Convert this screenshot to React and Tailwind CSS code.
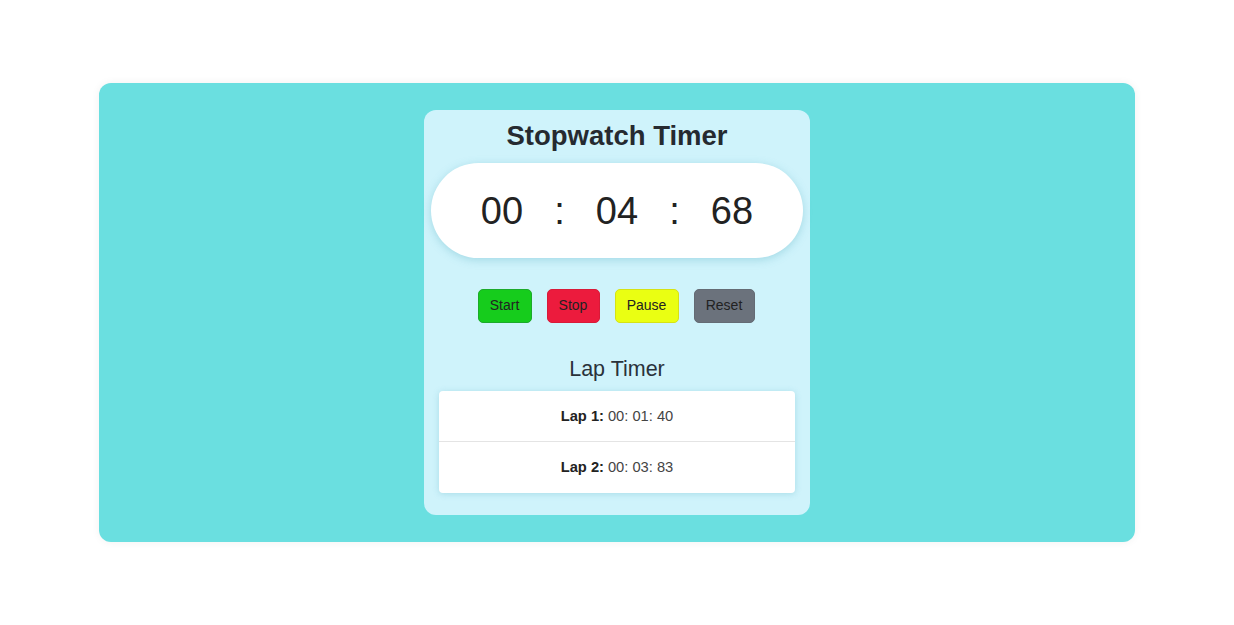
export default function App() {
  const font = { fontFamily: '"Liberation Sans", Arial, sans-serif' };
  return (
    <div className="w-full min-h-[625px] bg-white pt-[83px]" style={font}>
      <div className="mx-auto w-[1036px] h-[459px] bg-[#6adfe0] rounded-[12px] shadow-[0_0_8px_rgba(0,0,0,0.06)] pt-[27px] flex justify-center">
        <div className="w-[386px] h-[405px] bg-[#cff3fb] rounded-[12px] flex flex-col items-center">
          <h1 className="text-[27.5px] font-bold text-[#252a30] leading-none mt-[12px]">Stopwatch Timer</h1>
          <div className="mt-[13px] w-[372px] h-[95px] bg-white rounded-full shadow-[0_2px_8px_rgba(80,170,190,0.35)] flex items-center justify-center text-[38px] text-[#222] leading-none pt-[2px]">
            <span className="w-[60px] text-center">00</span>
            <span className="w-[55px] text-center">:</span>
            <span className="w-[60px] text-center">04</span>
            <span className="w-[55px] text-center">:</span>
            <span className="w-[60px] text-center">68</span>
          </div>
          <div className="mt-[31px] flex gap-[15px] text-[14px] text-[#222] ml-[-2px]">
            <button className="w-[54px] h-[34px] rounded-[5px] bg-[#16cc1c] border border-[#1caa2a]">Start</button>
            <button className="w-[53px] h-[34px] rounded-[5px] bg-[#ec1b3d] border border-[#d81a38]">Stop</button>
            <button className="w-[64px] h-[34px] rounded-[5px] bg-[#eaff12] border border-[#d6e214]">Pause</button>
            <button className="w-[61px] h-[34px] rounded-[5px] bg-[#6b727c] border border-[#646b74]">Reset</button>
          </div>
          <h2 className="mt-[36px] text-[21.5px] text-[#2a323a] leading-none">Lap Timer</h2>
          <div className="mt-[11px] w-[356px] bg-white rounded-[4px] shadow-[0_1px_6px_rgba(80,170,190,0.3)] text-[14.7px] text-[#444]">
            <div className="h-[51px] flex items-center justify-center border-b border-[#e4e4e4]">
              <b className="text-[#222] mr-[4px]">Lap 1:</b>00: 01: 40
            </div>
            <div className="h-[51px] flex items-center justify-center">
              <b className="text-[#222] mr-[4px]">Lap 2:</b>00: 03: 83
            </div>
          </div>
        </div>
      </div>
    </div>
  );
}
